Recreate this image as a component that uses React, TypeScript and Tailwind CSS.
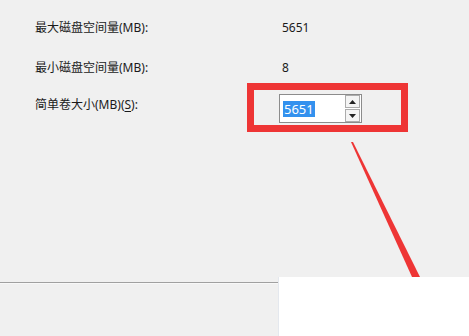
import React from "react";

const rows = [
  { label: "最大磁盘空间量(MB):", value: "5651" },
  { label: "最小磁盘空间量(MB):", value: "8" },
];

function Spin() {
  return (
    <div className="flex flex-col gap-px">
      <div className="grid h-[13px] w-[15px] place-items-center border border-[#acacac] bg-[#f4f4f4]">
        <svg width="7" height="4" viewBox="0 0 7 4">
          <path d="M0 4 L3.5 0 L7 4 Z" fill="#222" />
        </svg>
      </div>
      <div className="grid h-[13px] w-[15px] place-items-center border border-[#acacac] bg-[#f4f4f4]">
        <svg width="7" height="4" viewBox="0 0 7 4">
          <path d="M0 0 L7 0 L3.5 4 Z" fill="#222" />
        </svg>
      </div>
    </div>
  );
}

export default function App() {
  return (
    <div
      className="relative h-[336px] w-[469px] overflow-hidden bg-[#f0f0f0] text-[12px] text-[#1a1a1a]"
      style={{ fontFamily: '"Noto Sans", "Noto Sans CJK SC", sans-serif' }}
    >
      <div className="h-[277px] pl-[35px] pt-[19px]">
        <div className="grid grid-cols-[244px_1fr]">
          {rows.map((r, i) => (
            <React.Fragment key={r.label}>
              <div className={`h-[18px] leading-[18px] ${i === 1 ? "mt-[22px]" : ""}`}>{r.label}</div>
              <div className={`h-[18px] pl-[3px] leading-[18px] ${i === 1 ? "mt-[22px]" : ""}`}>{r.value}</div>
            </React.Fragment>
          ))}
          <div className="mt-[19px] h-[18px] leading-[18px]">
            简单卷大小(MB)(<span className="underline underline-offset-2">S</span>):
          </div>
          <div className="mt-[17px]">
            <div className="flex h-[29px] w-[83px] items-center justify-between border border-[#8c8c8c] bg-white pl-[3px] pr-px">
              <span className="bg-[#3391ee] px-px text-[13px] leading-[16px] text-white">5651</span>
              <Spin />
            </div>
          </div>
        </div>
      </div>

      <div className="flex h-[59px]">
        <div className="flex-1 pt-[5px]">
          <div className="border-t border-[#a0a0a0]" />
          <div className="border-t border-[#f8f8f8]" />
        </div>
        <div className="w-[191px] border-l border-[#e4e8ee] bg-white" />
      </div>

      <div className="absolute left-[247px] top-[83px] h-[49px] w-[161px] border-[7px] border-[#ee3535]" />
      <svg className="absolute left-0 top-0" width="469" height="336" viewBox="0 0 469 336">
        <polygon points="351,142 353,142 420,277 412,277" fill="#ee3535" />
      </svg>
    </div>
  );
}
